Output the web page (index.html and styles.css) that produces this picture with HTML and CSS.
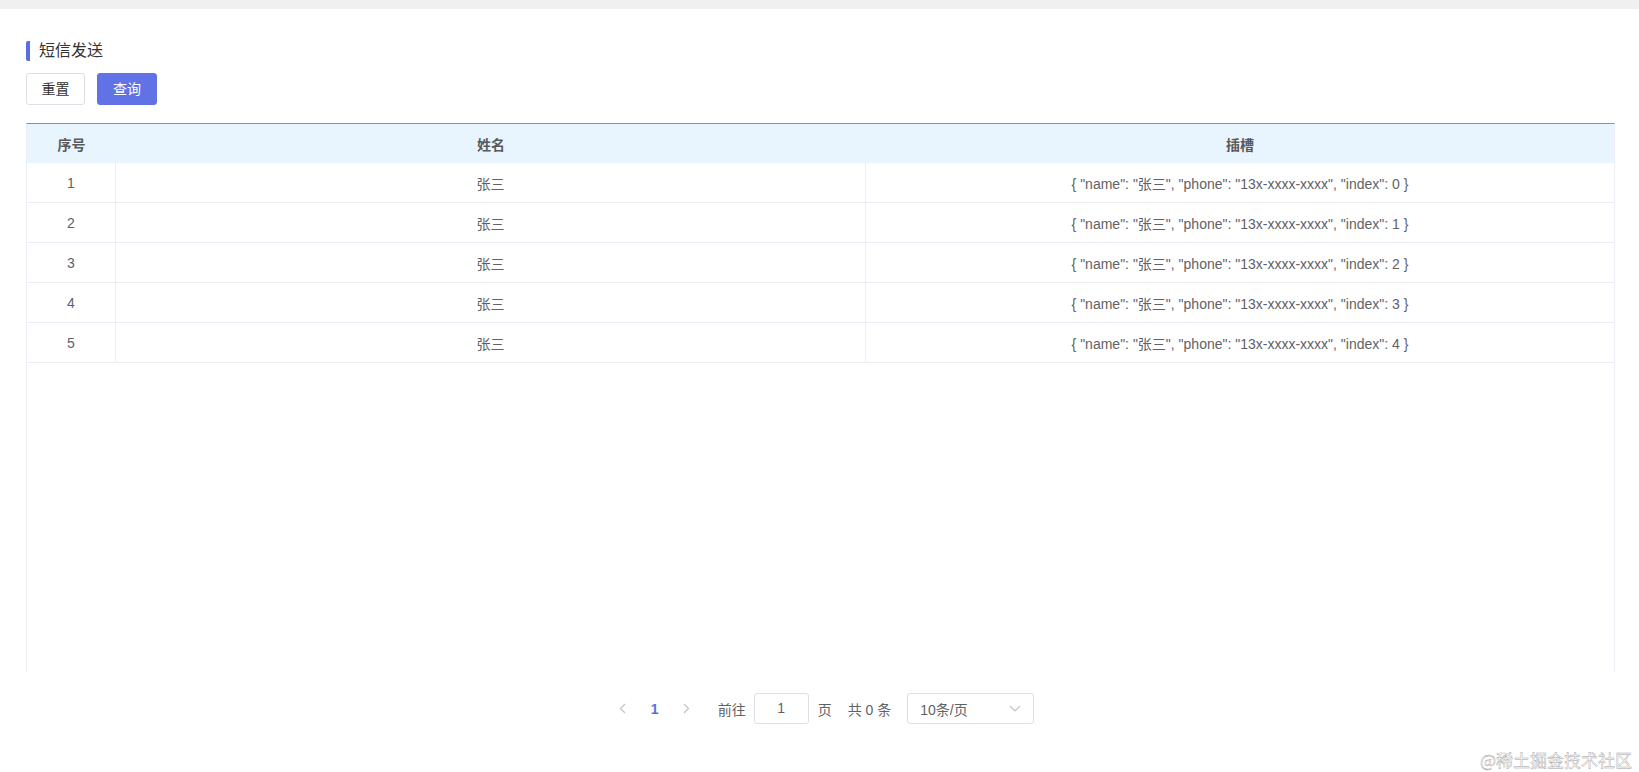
FILE: index.html
```html
<!DOCTYPE html>
<html>
	<head>
		<title>短信发送</title>
		<meta charset="utf-8">
		<link rel="stylesheet" href="styles.css">
	</head>
	<body>
		<div class="topbar"></div>
		<div class="page">
			<div class="title">短信发送</div>
			<div class="btns">
				<span class="btn">重置</span>
				<span class="btn primary">查询</span>
			</div>
			<div class="table">
				<div class="row head">
					<div class="cell">序号</div>
					<div class="cell">姓名</div>
					<div class="cell">插槽</div>
				</div>
				<div class="row">
					<div class="cell">1</div>
					<div class="cell">张三</div>
					<div class="cell">{ "name": "张三", "phone": "13x-xxxx-xxxx", "index": 0 }</div>
				</div>
				<div class="row">
					<div class="cell">2</div>
					<div class="cell">张三</div>
					<div class="cell">{ "name": "张三", "phone": "13x-xxxx-xxxx", "index": 1 }</div>
				</div>
				<div class="row">
					<div class="cell">3</div>
					<div class="cell">张三</div>
					<div class="cell">{ "name": "张三", "phone": "13x-xxxx-xxxx", "index": 2 }</div>
				</div>
				<div class="row">
					<div class="cell">4</div>
					<div class="cell">张三</div>
					<div class="cell">{ "name": "张三", "phone": "13x-xxxx-xxxx", "index": 3 }</div>
				</div>
				<div class="row">
					<div class="cell">5</div>
					<div class="cell">张三</div>
					<div class="cell">{ "name": "张三", "phone": "13x-xxxx-xxxx", "index": 4 }</div>
				</div>
			</div>
			<div class="pager">
				<span class="pg-btn">
					<svg width="7" height="11" viewBox="0 0 7 11"><path d="M6 1L1.5 5.5 6 10" fill="none" stroke="#c0c4cc" stroke-width="1.2"/></svg>
				</span>
				<span class="pg-btn current">1</span>
				<span class="pg-btn">
					<svg width="7" height="11" viewBox="0 0 7 11"><path d="M1 1l4.5 4.5L1 10" fill="none" stroke="#c0c4cc" stroke-width="1.2"/></svg>
				</span>
				<span class="jump">前往</span>
				<span class="pg-input">1</span>
				<span class="unit">页</span>
				<span class="total">共 0 条</span>
				<span class="pg-select">
					10条/页
					<svg width="12" height="7" viewBox="0 0 12 7"><path d="M1 1l5 5 5-5" fill="none" stroke="#c0c4cc" stroke-width="1.2"/></svg>
				</span>
			</div>
		</div>
		<div class="mark">@稀土掘金技术社区</div>
	</body>
</html>
```

FILE: styles.css
```css
body {
	margin: 0;
	background: #fff;
	font: 14px "Liberation Sans", "Noto Sans CJK SC", sans-serif;
	color: #606266;
}

.topbar {
	height: 9px;
	background: #f0f0f1;
}

.page {
	padding: 32px 24px 0 26px;
}

/* 标题 */
.title {
	height: 20px;
	line-height: 20px;
	font-size: 16px;
	color: #333;
	border-left: 4px solid #5b6ee1;
	border-radius: 2px;
	padding-left: 9px;
}

.btns {
	display: flex;
	gap: 12px;
	margin-top: 12px;
}

.btn {
	box-sizing: border-box;
	width: 59px;
	height: 32px;
	line-height: 30px;
	text-align: center;
	border: 1px solid #dcdfe6;
	border-radius: 3px;
	color: #333;
	font-size: 14px;
}

.btn.primary {
	width: 60px;
	background: #6171e6;
	border-color: #6171e6;
	color: #fff;
}

/* 表格 */
.table {
	box-sizing: border-box;
	margin-top: 18px;
	height: 549px;
	border-top: 1px solid #4fa3dc;
	border-left: 1px solid #ebeef5;
	border-right: 1px solid #ebeef5;
}

.row {
	display: grid;
	grid-template-columns: 89px 750px 1fr;
	height: 40px;
	box-sizing: border-box;
	border-bottom: 1px solid #ebeef5;
}

.cell {
	display: flex;
	align-items: center;
	justify-content: center;
	border-right: 1px solid #ebeef5;
}

.cell:last-child {
	border-right: none;
}

.row.head {
	height: 39px;
	background: #e8f4fe;
	border-bottom: none;
	font-weight: bold;
	color: #5a5a5a;
}

.row.head .cell {
	border-right: none;
}

/* 分页 */
.pager {
	display: flex;
	align-items: center;
	justify-content: center;
	margin-top: 21px;
	height: 31px;
	color: #606266;
}

.pg-btn {
	width: 32px;
	display: flex;
	justify-content: center;
	align-items: center;
}

.pg-btn.current {
	color: #5b6ee1;
	font-weight: bold;
}

.jump {
	margin-left: 15px;
}

.pg-input {
	box-sizing: border-box;
	width: 55px;
	height: 31px;
	line-height: 29px;
	margin-left: 8px;
	text-align: center;
	border: 1px solid #dcdfe6;
	border-radius: 3px;
}

.unit {
	margin-left: 9px;
}

.total {
	margin-left: 16px;
}

.pg-select {
	box-sizing: border-box;
	display: flex;
	align-items: center;
	justify-content: space-between;
	width: 127px;
	height: 31px;
	margin-left: 16px;
	padding: 0 12px 0 12px;
	border: 1px solid #dcdfe6;
	border-radius: 3px;
}

.mark {
	position: absolute;
	right: 7px;
	top: 747px;
	font-size: 17px;
	color: #fff;
	-webkit-text-stroke: 0.4px #a0a0a0;
	font-family: "Noto Sans CJK SC", sans-serif;
}
```
